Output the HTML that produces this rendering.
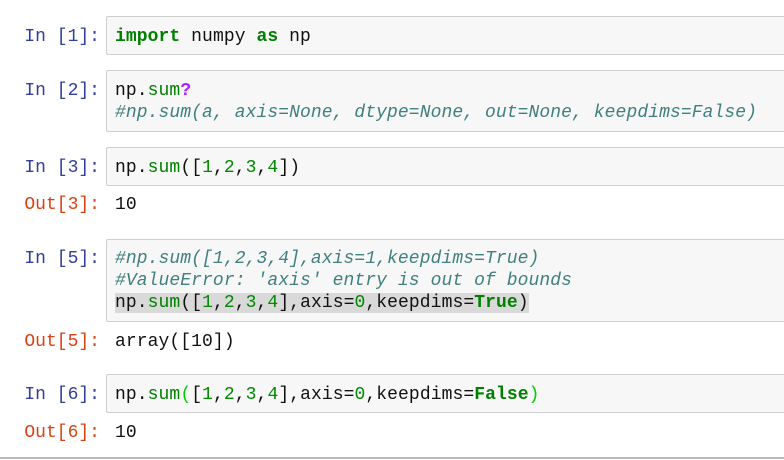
<!DOCTYPE html>
<html><head><style>
body{margin:0;width:784px;height:460px;background:#fff;position:relative;overflow:hidden;font-family:"Liberation Mono","Courier New",monospace;font-size:18px;}
.p{position:absolute;right:684px;line-height:22px;white-space:pre;color:#303f9f}
.o{color:#d84315}
.box{position:absolute;left:106px;width:690px;background:#f7f7f7;border:1px solid #cfcfcf;border-radius:2px;}
.t{position:absolute;left:115px;line-height:22px;white-space:pre;color:#111;letter-spacing:0.08px}
.k{color:#008000;font-weight:bold}.b{color:#008000}.n{color:#080}.c{color:#408080;font-style:italic}.q{color:#aa22ff;font-weight:bold}
.hl{background:#d9d9d9}
</style></head><body>
<div class="box" style="top:16px;height:37px"></div>
<div class="p" style="top:26px">In [1]:</div>
<div class="t" style="top:26px"><span class="k">import</span> numpy <span class="k">as</span> np</div>

<div class="box" style="top:70px;height:60px"></div>
<div class="p" style="top:80px">In [2]:</div>
<div class="t" style="top:80px">np.<span class="b">sum</span><span class="q">?</span>
<span class="c">#np.sum(a, axis=None, dtype=None, out=None, keepdims=False)</span></div>

<div class="box" style="top:147px;height:37px"></div>
<div class="p" style="top:157px">In [3]:</div>
<div class="t" style="top:157px">np.<span class="b">sum</span>([<span class="n">1</span>,<span class="n">2</span>,<span class="n">3</span>,<span class="n">4</span>])</div>
<div class="p o" style="top:194px">Out[3]:</div>
<div class="t" style="top:194px">10</div>

<div class="box" style="top:239px;height:81px"></div>
<div class="p" style="top:248px">In [5]:</div>
<div class="t" style="top:248px"><span class="c">#np.sum([1,2,3,4],axis=1,keepdims=True)</span>
<span class="c">#ValueError: 'axis' entry is out of bounds</span>
<span class="hl">np.<span class="b">sum</span>([<span class="n">1</span>,<span class="n">2</span>,<span class="n">3</span>,<span class="n">4</span>],axis=<span class="n">0</span>,keepdims=<span class="k">True</span>)</span></div>
<div class="p o" style="top:331px">Out[5]:</div>
<div class="t" style="top:331px">array([10])</div>

<div class="box" style="top:374px;height:37px"></div>
<div class="p" style="top:384px">In [6]:</div>
<div class="t" style="top:384px">np.<span class="b">sum</span><span style="color:#0c0">(</span>[<span class="n">1</span>,<span class="n">2</span>,<span class="n">3</span>,<span class="n">4</span>],axis=<span class="n">0</span>,keepdims=<span class="k">False</span><span style="color:#0c0">)</span></div>
<div class="p o" style="top:422px">Out[6]:</div>
<div class="t" style="top:422px">10</div>
<div style="position:absolute;left:0;top:457px;width:784px;height:2px;background:#bbb"></div>
</body></html>
